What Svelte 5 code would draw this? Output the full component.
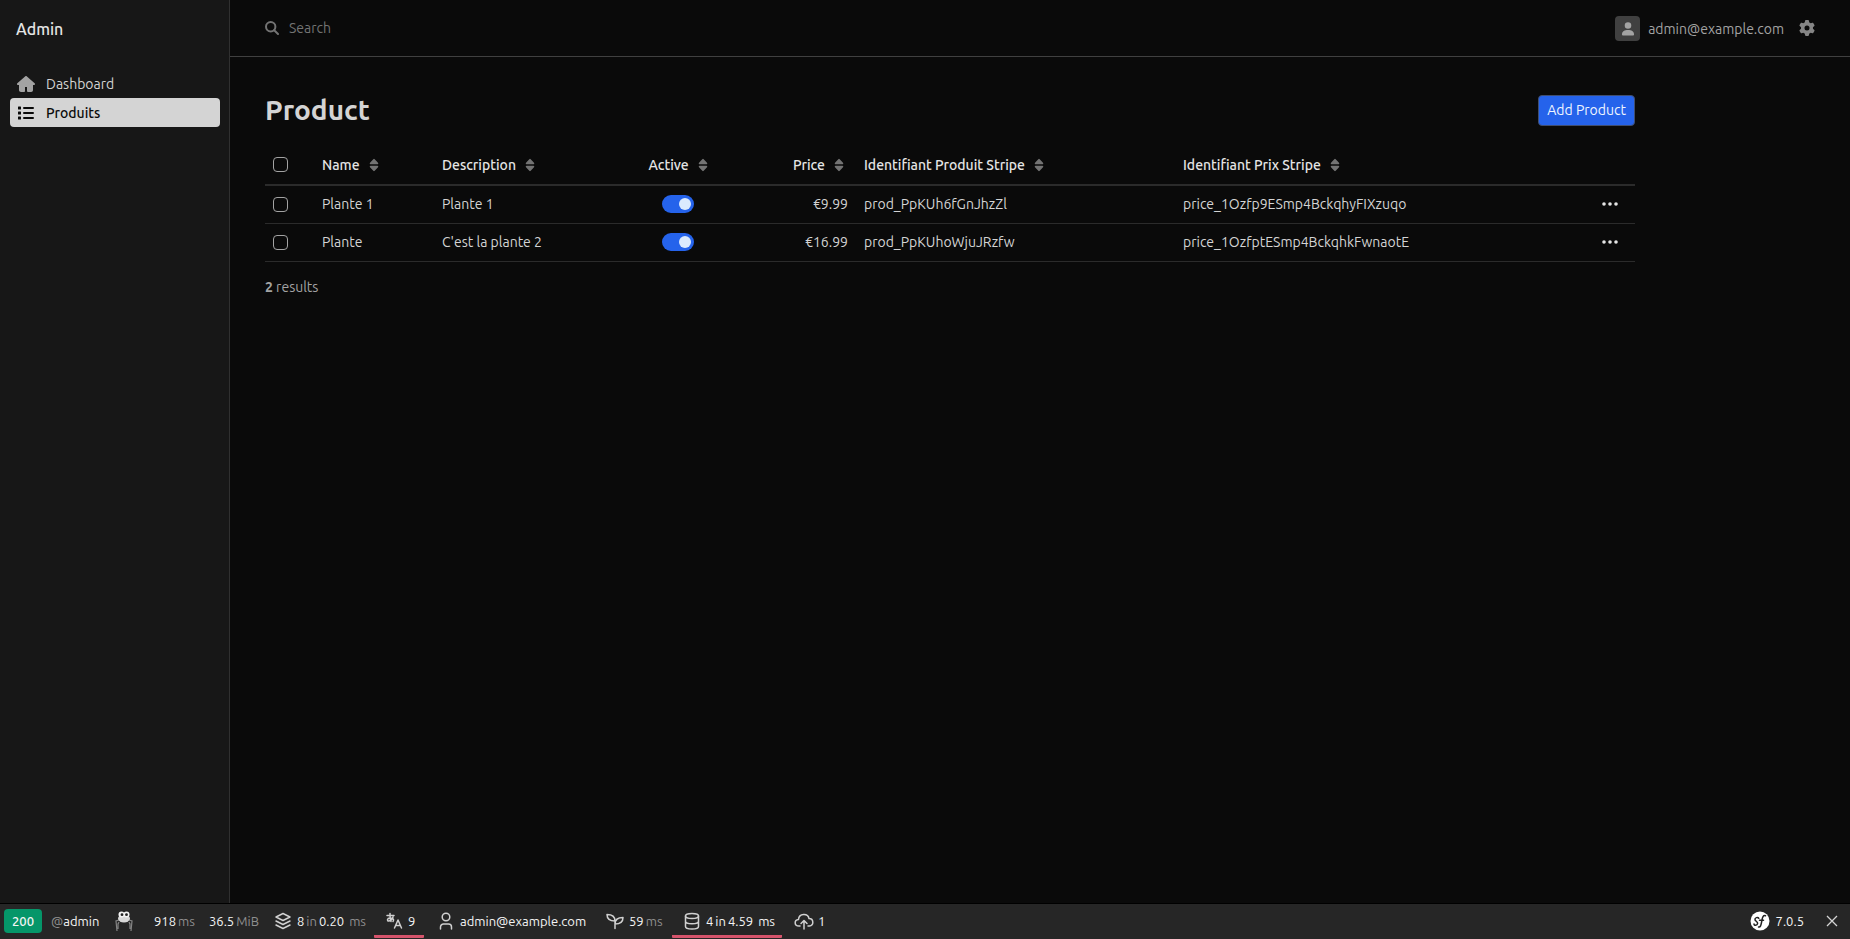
<script>
	let selected = $state([]);

	const columns = [
		{ label: 'Name' },
		{ label: 'Description' },
		{ label: 'Active', align: 'center' },
		{ label: 'Price', align: 'right' },
		{ label: 'Identifiant Produit Stripe' },
		{ label: 'Identifiant Prix Stripe' }
	];

	let products = $state([
		{
			id: 1,
			name: 'Plante 1',
			description: 'Plante 1',
			active: true,
			price: '€9.99',
			productId: 'prod_PpKUh6fGnJhzZl',
			priceId: 'price_1Ozfp9ESmp4BckqhyFIXzuqo'
		},
		{
			id: 2,
			name: 'Plante',
			description: "C'est la plante 2",
			active: true,
			price: '€16.99',
			productId: 'prod_PpKUhoWjuJRzfw',
			priceId: 'price_1OzfptESmp4BckqhkFwnaotE'
		}
	]);

	let toolbarOpen = $state(true);

	let toggleAll = (event) => {
		selected = event.target.checked ? products.map((product) => product.id) : [];
	};
</script>

<div class="page">
	<div class="wrapper">
		<aside class="sidebar">
			<a class="logo" href="#admin">Admin</a>
			<nav>
				<a class="menu-item" href="#dashboard">
					<svg class="home" width="18" height="16" viewBox="0 0 576 512" fill="currentColor">
						<path
							d="M575.8 255.5c0 18-15 32.1-32 32.1h-32l.7 160.2c.2 35.5-28.5 64.3-64 64.3H352c-17.700 0-32-14.300-32-32V352h-64v128c0 17.700-14.300 32-32 32h-96.500c-35.300 0-64-28.700-64-64V287.600H32c-18 0-32-14-32-32.100 0-9 3-17 10-24L266.400 8c7-7 15-8 22-8s15 2 21 7l255.400 224.500c8 7 12 15 11 24z" />
					</svg>
					<span>Dashboard</span>
				</a>
				<a class="menu-item active" href="#produits">
					<svg width="18" height="16" viewBox="0 0 18 16" fill="currentColor">
						<path
							d="M1.500 1.500h2q.5 0 .5.5v2q0 .5-.5.5h-2q-.5 0-.5-.5V2q0-.5.5-.5zM1.500 6.500h2q.5 0 .5.5v2q0 .5-.5.5h-2q-.5 0-.5-.5V7q0-.5.5-.5zM1.500 11.500h2q.5 0 .5.5v2q0 .5-.5.5h-2q-.5 0-.5-.5v-2q0-.5.5-.5zM7 2h9a1 1 0 0 1 0 2H7a1 1 0 0 1 0-2zM7 7h9a1 1 0 0 1 0 2H7a1 1 0 0 1 0-2zM7 12h9a1 1 0 0 1 0 2H7a1 1 0 0 1 0-2z" />
					</svg>
					<span>Produits</span>
				</a>
			</nav>
		</aside>

		<div class="main">
			<header>
				<label class="search">
					<svg
						width="14"
						height="14"
						viewBox="0 0 14 14"
						fill="none"
						stroke="currentColor"
						stroke-width="2"
						stroke-linecap="round">
						<circle cx="5.700" cy="5.700" r="4.700" />
						<path d="M9.200 9.200 13 13" />
					</svg>
					<input type="search" placeholder="Search" aria-label="Search" />
				</label>
				<div class="account">
					<button class="user">
						<span class="avatar">
							<svg width="14" height="16" viewBox="0 0 448 512" fill="currentColor">
								<path
									d="M224 248a105 105 0 1 0 0-210 105 105 0 1 0 0 210zm-45 40C80 288 30 360 30 430c0 20 12 30 32 30h324c20 0 32-10 32-30 0-70-50-142-149-142h-90z" />
							</svg>
						</span>
						admin@example.com
					</button>
					<button class="settings" aria-label="Settings">
						<svg width="16" height="16" viewBox="0 0 512 512" fill="currentColor">
							<path
								d="M495.900 166.600c3.200 8.700.5 18.400-6.400 24.600l-43.300 39.400c1.100 8.300 1.700 16.800 1.700 25.400s-.6 17.100-1.700 25.400l43.300 39.400c6.900 6.200 9.600 15.900 6.400 24.600-4.400 11.900-9.700 23.300-15.800 34.300l-4.700 8.100c-6.600 11-14 21.400-22.100 31.200-5.900 7.200-15.700 9.600-24.500 6.800l-55.700-17.700c-13.400 10.300-28.200 18.900-44 25.400l-12.500 57.100c-2 9.100-9 16.300-18.200 17.800-13.800 2.300-28 3.500-42.500 3.500s-28.700-1.200-42.500-3.500c-9.200-1.500-16.200-8.700-18.200-17.800l-12.500-57.100c-15.800-6.500-30.600-15.100-44-25.400L83.100 425.900c-8.800 2.800-18.600.3-24.500-6.800-8.100-9.800-15.500-20.200-22.100-31.200l-4.700-8.100c-6.100-11-11.400-22.400-15.800-34.300-3.200-8.700-.5-18.400 6.400-24.600l43.300-39.400C64.600 273.100 64 264.600 64 256s.6-17.100 1.700-25.400L22.400 191.200c-6.900-6.200-9.600-15.900-6.400-24.600 4.400-11.900 9.700-23.300 15.800-34.300l4.700-8.100c6.600-11 14-21.400 22.100-31.200 5.900-7.200 15.700-9.600 24.500-6.800l55.700 17.700c13.400-10.300 28.200-18.900 44-25.400l12.500-57.100c2-9.100 9-16.300 18.200-17.800C227.300 1.200 241.500 0 256 0s28.700 1.200 42.500 3.500c9.200 1.500 16.200 8.700 18.200 17.800l12.500 57.100c15.800 6.500 30.600 15.100 44 25.400l55.700-17.700c8.800-2.800 18.600-.3 24.500 6.800 8.100 9.800 15.500 20.200 22.100 31.200l4.700 8.100c6.100 11 11.400 22.400 15.800 34.300zM256 336a80 80 0 1 0 0-160 80 80 0 1 0 0 160z" />
						</svg>
					</button>
				</div>
			</header>

			<main>
				<div class="content-header">
					<h1>Product</h1>
					<a class="btn-primary" href="#new">Add Product</a>
				</div>

				<table>
					<colgroup>
						<col class="col-check" />
						<col class="col-name" />
						<col class="col-description" />
						<col class="col-active" />
						<col class="col-price" />
						<col class="col-product" />
						<col class="col-prix" />
						<col class="col-actions" />
					</colgroup>
					<thead>
						<tr>
							<th>
								<input
									class="check"
									type="checkbox"
									aria-label="Select all"
									checked={selected.length === products.length}
									onchange={toggleAll} />
							</th>
							{#each columns as column}
								<th class={column.align}>
									<a class="sort" href="#sort">
										{column.label}
										<svg width="10" height="14" viewBox="0 0 10 14" fill="currentColor">
											<path
												d="M4.300 1.200Q5 .5 5.700 1.200L9 4.700Q9.900 6.200 8.500 6.300h-7Q.1 6.200 1 4.700zM4.300 12.800Q5 13.500 5.700 12.800L9 9.300Q9.900 7.800 8.500 7.700h-7Q.1 7.800 1 9.300z" />
										</svg>
									</a>
								</th>
							{/each}
							<th></th>
						</tr>
					</thead>
					<tbody>
						{#each products as product (product.id)}
							<tr>
								<td>
									<input
										class="check"
										type="checkbox"
										aria-label="Select {product.name}"
										value={product.id}
										bind:group={selected} />
								</td>
								<td>{product.name}</td>
								<td>{product.description}</td>
								<td class="center">
									<input
										class="switch"
										type="checkbox"
										role="switch"
										aria-label="{product.name} active"
										bind:checked={product.active} />
								</td>
								<td class="right">{product.price}</td>
								<td>{product.productId}</td>
								<td>{product.priceId}</td>
								<td class="right">
									<button class="dots" aria-label="Actions for {product.name}">
										<svg width="18" height="6" viewBox="0 0 18 6" fill="currentColor">
											<circle cx="3" cy="3" r="1.800" />
											<circle cx="9" cy="3" r="1.800" />
											<circle cx="15" cy="3" r="1.800" />
										</svg>
									</button>
								</td>
							</tr>
						{/each}
					</tbody>
				</table>

				<p class="results"><strong>{products.length}</strong> results</p>
			</main>
		</div>
	</div>

	{#if toolbarOpen}
		<footer class="toolbar">
			<a class="block request" href="#request">
				<span class="status">200</span>
				<span><span class="muted">@</span>admin</span>
			</a>
			<a class="block stimulus" href="#components" aria-label="Components">
				<svg width="20" height="22" viewBox="0 0 20 22">
					<g fill="none" stroke="#858585" stroke-width="1.200">
						<path d="M5 10 2 11 3 21M15 10l3 1-1 10M5 12l-1 2v5M15 12l1 2v5" />
					</g>
					<ellipse cx="10" cy="8.500" rx="6" ry="4" fill="#d8d8d8" />
					<circle cx="7.500" cy="4.500" r="3" fill="#f5f5f5" />
					<circle cx="12.500" cy="4.500" r="3" fill="#f5f5f5" />
					<circle cx="8" cy="4.700" r="1.400" fill="#222" />
					<circle cx="12.500" cy="4.700" r="1.400" fill="#222" />
				</svg>
			</a>
			<a class="block time" href="#time"><span>918</span><span class="muted">ms</span></a>
			<a class="block memory" href="#memory"><span>36.5</span><span class="muted">MiB</span></a>
			<a class="block cache" href="#cache">
				<svg class="icon" viewBox="0 0 24 24">
					<path
						d="m12 4.500 7 3.500-7 3.500L5 8zM5 12l7 3.500 7-3.500M5 16l7 3.500 7-3.500" />
				</svg>
				<span>8</span><span class="muted">in</span><span>0.20</span><span class="muted unit"
					>ms</span>
			</a>
			<a class="block translation warn" href="#translation">
				<svg class="icon" viewBox="0 0 24 24">
					<path
						d="M5 6.500h7M8 4.500c0 4 0 6 1 8M11 8c-1 3-3 4-4.500 4S5 9 8 9s4.500 1.500 3 3.500M12.500 19 16 11l3.500 8M14 16.500h4" />
				</svg>
				<span>9</span>
			</a>
			<a class="block security" href="#security">
				<svg class="icon" viewBox="0 0 24 24">
					<circle cx="12" cy="8" r="3.800" />
					<path d="M6.500 20v-2a3 3 0 0 1 3-3h5a3 3 0 0 1 3 3v2" />
				</svg>
				<span>admin@example.com</span>
			</a>
			<a class="block twig" href="#twig">
				<svg class="icon" viewBox="0 0 24 24">
					<path
						d="M12 19.500V12M12 12c0-4-3-6.500-8-6.500 0 4 3 6.500 8 6.500zM12 15c0-4 3-6.500 8-6.500 0 4-3 6.500-8 6.500z" />
				</svg>
				<span>59</span><span class="muted">ms</span>
			</a>
			<a class="block database warn" href="#database">
				<svg class="icon" viewBox="0 0 24 24">
					<ellipse cx="12" cy="7" rx="6.500" ry="2.500" />
					<path
						d="M5.500 7v10.500C5.500 18.800 8 20 12 20s6.500-1.200 6.500-2.500V7M5.500 12.300c0 1.300 2.500 2.500 6.500 2.500s6.500-1.200 6.500-2.500" />
				</svg>
				<span>4</span><span>in</span><span>4.59</span><span class="unit">ms</span>
			</a>
			<a class="block upload" href="#http">
				<svg class="icon" viewBox="0 0 24 24">
					<path
						d="M8 17H7c-5 0-5-6-.5-6.500C7 4 16 4 17 9.500c5 0 5 7.500.5 7.500H16M12 20v-8M9 14.500l3-3 3 3" />
				</svg>
				<span>1</span>
			</a>
			<a class="block version" href="#config">
				<svg width="20" height="20" viewBox="0 0 20 20">
					<circle cx="10" cy="10" r="9.500" fill="#fff" />
					<path
						d="M8.800 7.300C8 5.800 4.500 6.500 5 8.800c.4 1.500 3 1.800 2.600 3.900-.4 2-3.600 2-3.600.4M8.500 16c1.900.6 2.500-1.500 3.300-6 .6-3.800 1.400-6 3.700-5.300M9.500 9.300h4"
						fill="none"
						stroke="#222"
						stroke-width="1.500"
						stroke-linecap="round" />
				</svg>
				<span>7.0.5</span>
			</a>
			<button class="close" aria-label="Close Toolbar" onclick={() => (toolbarOpen = false)}>
				<svg
					width="12"
					height="12"
					viewBox="0 0 12 12"
					fill="none"
					stroke="currentColor"
					stroke-width="1.300">
					<path d="m1 1 10 10M11 1 1 11" />
				</svg>
			</button>
		</footer>
	{/if}
</div>

<style>
	:global(body) {
		margin: 0;
		background: #0a0a0a;
	}

	.page {
		display: flex;
		flex-direction: column;
		min-height: 100vh;
		color: #d4d4d4;
		background: #0a0a0a;
		font: 14px/20px Ubuntu, 'Noto Sans', sans-serif;
	}

	a {
		color: inherit;
		text-decoration: none;
	}

	button {
		padding: 0;
		border: 0;
		background: none;
		color: inherit;
		font: inherit;
		cursor: pointer;
	}

	.wrapper {
		display: flex;
		flex: 1;
	}

	.sidebar {
		box-sizing: border-box;
		width: 230px;
		padding: 0 9px 0 10px;
		border-right: 1px solid #303030;
		background: #171717;
	}

	.logo {
		display: flex;
		align-items: center;
		height: 58px;
		padding-left: 6px;
		color: #e5e5e5;
		font-size: 16px;
		font-weight: 550;
	}

	nav {
		padding-top: 11px;
	}

	.menu-item {
		display: flex;
		align-items: center;
		gap: 11px;
		height: 29px;
		padding: 0 7px;
		border-radius: 4px;
	}

	.menu-item svg {
		color: #a3a3a3;
	}

	.menu-item.active {
		background: #d4d4d4;
		color: #0a0a0a;
		font-weight: 550;
	}

	.menu-item.active svg {
		color: inherit;
	}

	.main {
		flex: 1;
		min-width: 0;
	}

	header {
		display: flex;
		align-items: center;
		justify-content: space-between;
		height: 56px;
		padding: 0 35px;
		border-bottom: 1px solid #404040;
	}

	.search {
		display: flex;
		align-items: center;
		gap: 10px;
		color: #737373;
	}

	.search input {
		width: 320px;
		padding: 0;
		border: 0;
		outline: 0;
		background: none;
		color: inherit;
		font: inherit;
	}

	.search input::placeholder {
		color: #737373;
	}

	.account,
	.user {
		display: flex;
		align-items: center;
	}

	.account {
		gap: 15px;
		color: #a3a3a3;
	}

	.user {
		gap: 8px;
		padding-top: 1px;
	}

	.avatar {
		display: flex;
		align-items: center;
		justify-content: center;
		width: 25px;
		height: 25px;
		border-radius: 4px;
		background: #404040;
	}

	.settings {
		display: flex;
		color: #858585;
	}

	main {
		max-width: 1370px;
		padding: 36px 35px;
	}

	.content-header {
		display: flex;
		align-items: center;
		justify-content: space-between;
	}

	h1 {
		margin: 0;
		font-size: 28px;
		line-height: 34px;
		font-weight: 700;
	}

	.btn-primary {
		padding: 5px 8px;
		border: 1px solid #404e70;
		border-radius: 4px;
		background: #2563eb;
		color: #eff6ff;
		line-height: 19px;
	}

	table {
		width: 100%;
		margin-top: 18px;
		border-collapse: collapse;
		table-layout: fixed;
	}

	.col-check {
		width: 49px;
	}

	.col-name {
		width: 120px;
	}

	.col-description {
		width: 194px;
	}

	.col-active {
		width: 100px;
	}

	.col-price {
		width: 128px;
	}

	.col-product {
		width: 319px;
	}

	.col-prix {
		width: 370px;
	}

	.col-actions {
		width: 90px;
	}

	th,
	td {
		height: 36px;
		padding: 0 8px 1px;
		border-bottom: 1px solid #2b2b2b;
		text-align: left;
		white-space: nowrap;
	}

	th {
		height: 39px;
		padding-bottom: 0;
		border-bottom-width: 2px;
		color: #e5e5e5;
		font-weight: 550;
	}

	.center {
		text-align: center;
	}

	.right {
		text-align: right;
	}

	.sort {
		display: inline-flex;
		align-items: center;
		gap: 9px;
	}

	.sort svg {
		color: #737373;
	}

	th.right .sort {
		padding-right: 4px;
	}

	.check,
	.switch {
		display: block;
		appearance: none;
		margin: 0;
	}

	.check {
		box-sizing: border-box;
		width: 15px;
		height: 15px;
		border: 1px solid #a3a3a3;
		border-radius: 4px;
	}

	.check:checked {
		background: #2563eb;
	}

	.switch {
		display: flex;
		align-items: center;
		box-sizing: border-box;
		width: 32px;
		height: 18px;
		margin: 0 auto;
		padding: 3px;
		border-radius: 9px;
		background: #404040;
	}

	.switch::before {
		content: '';
		width: 12px;
		height: 12px;
		border-radius: 50%;
		background: #dbeafe;
	}

	.switch:checked {
		justify-content: flex-end;
		background: #2563eb;
	}

	.dots {
		display: block;
		margin-left: auto;
		padding: 6px 8px;
		color: #e5e5e5;
	}

	.dots svg {
		display: block;
	}

	.results {
		margin: 15px 0 0;
		color: #a3a3a3;
	}

	.results strong {
		font-weight: 700;
	}

	.toolbar {
		display: flex;
		gap: 2px;
		height: 34px;
		padding-bottom: 1px;
		border-top: 1px solid #000;
		background: #262626;
		color: #f5f5f5;
		font-size: 13px;
	}

	.block {
		display: flex;
		align-items: center;
		box-sizing: border-box;
		gap: 2px;
		padding: 0 8px;
		white-space: nowrap;
	}

	.block svg {
		flex-shrink: 0;
	}

	.muted {
		color: #8f8f8f;
	}

	.unit {
		padding-left: 3px;
	}

	.icon {
		width: 24px;
		height: 24px;
		fill: none;
		stroke: #d0d0d0;
		stroke-width: 1.5;
		stroke-linejoin: round;
		stroke-linecap: round;
	}

	.warn {
		border-bottom: 3px solid #d6546c;
		border-top: 3px solid transparent;
		border-radius: 1px;
	}

	.request {
		gap: 9px;
		width: 104px;
		padding: 0 4px;
	}

	.status {
		padding: 2px 8px;
		border-radius: 4px;
		background: #059669;
		font-weight: 550;
	}

	.stimulus {
		width: 38px;
	}

	.time {
		width: 53px;
	}

	.memory {
		width: 60px;
	}

	.cache {
		width: 109px;
	}

	.translation {
		width: 50px;
	}

	.security {
		width: 167px;
	}

	.twig {
		width: 75px;
	}

	.database {
		width: 110px;
	}

	.version {
		gap: 6px;
		margin-left: auto;
	}

	.close {
		display: flex;
		align-items: center;
		padding: 0 12px;
		color: #d4d4d4;
	}
</style>
